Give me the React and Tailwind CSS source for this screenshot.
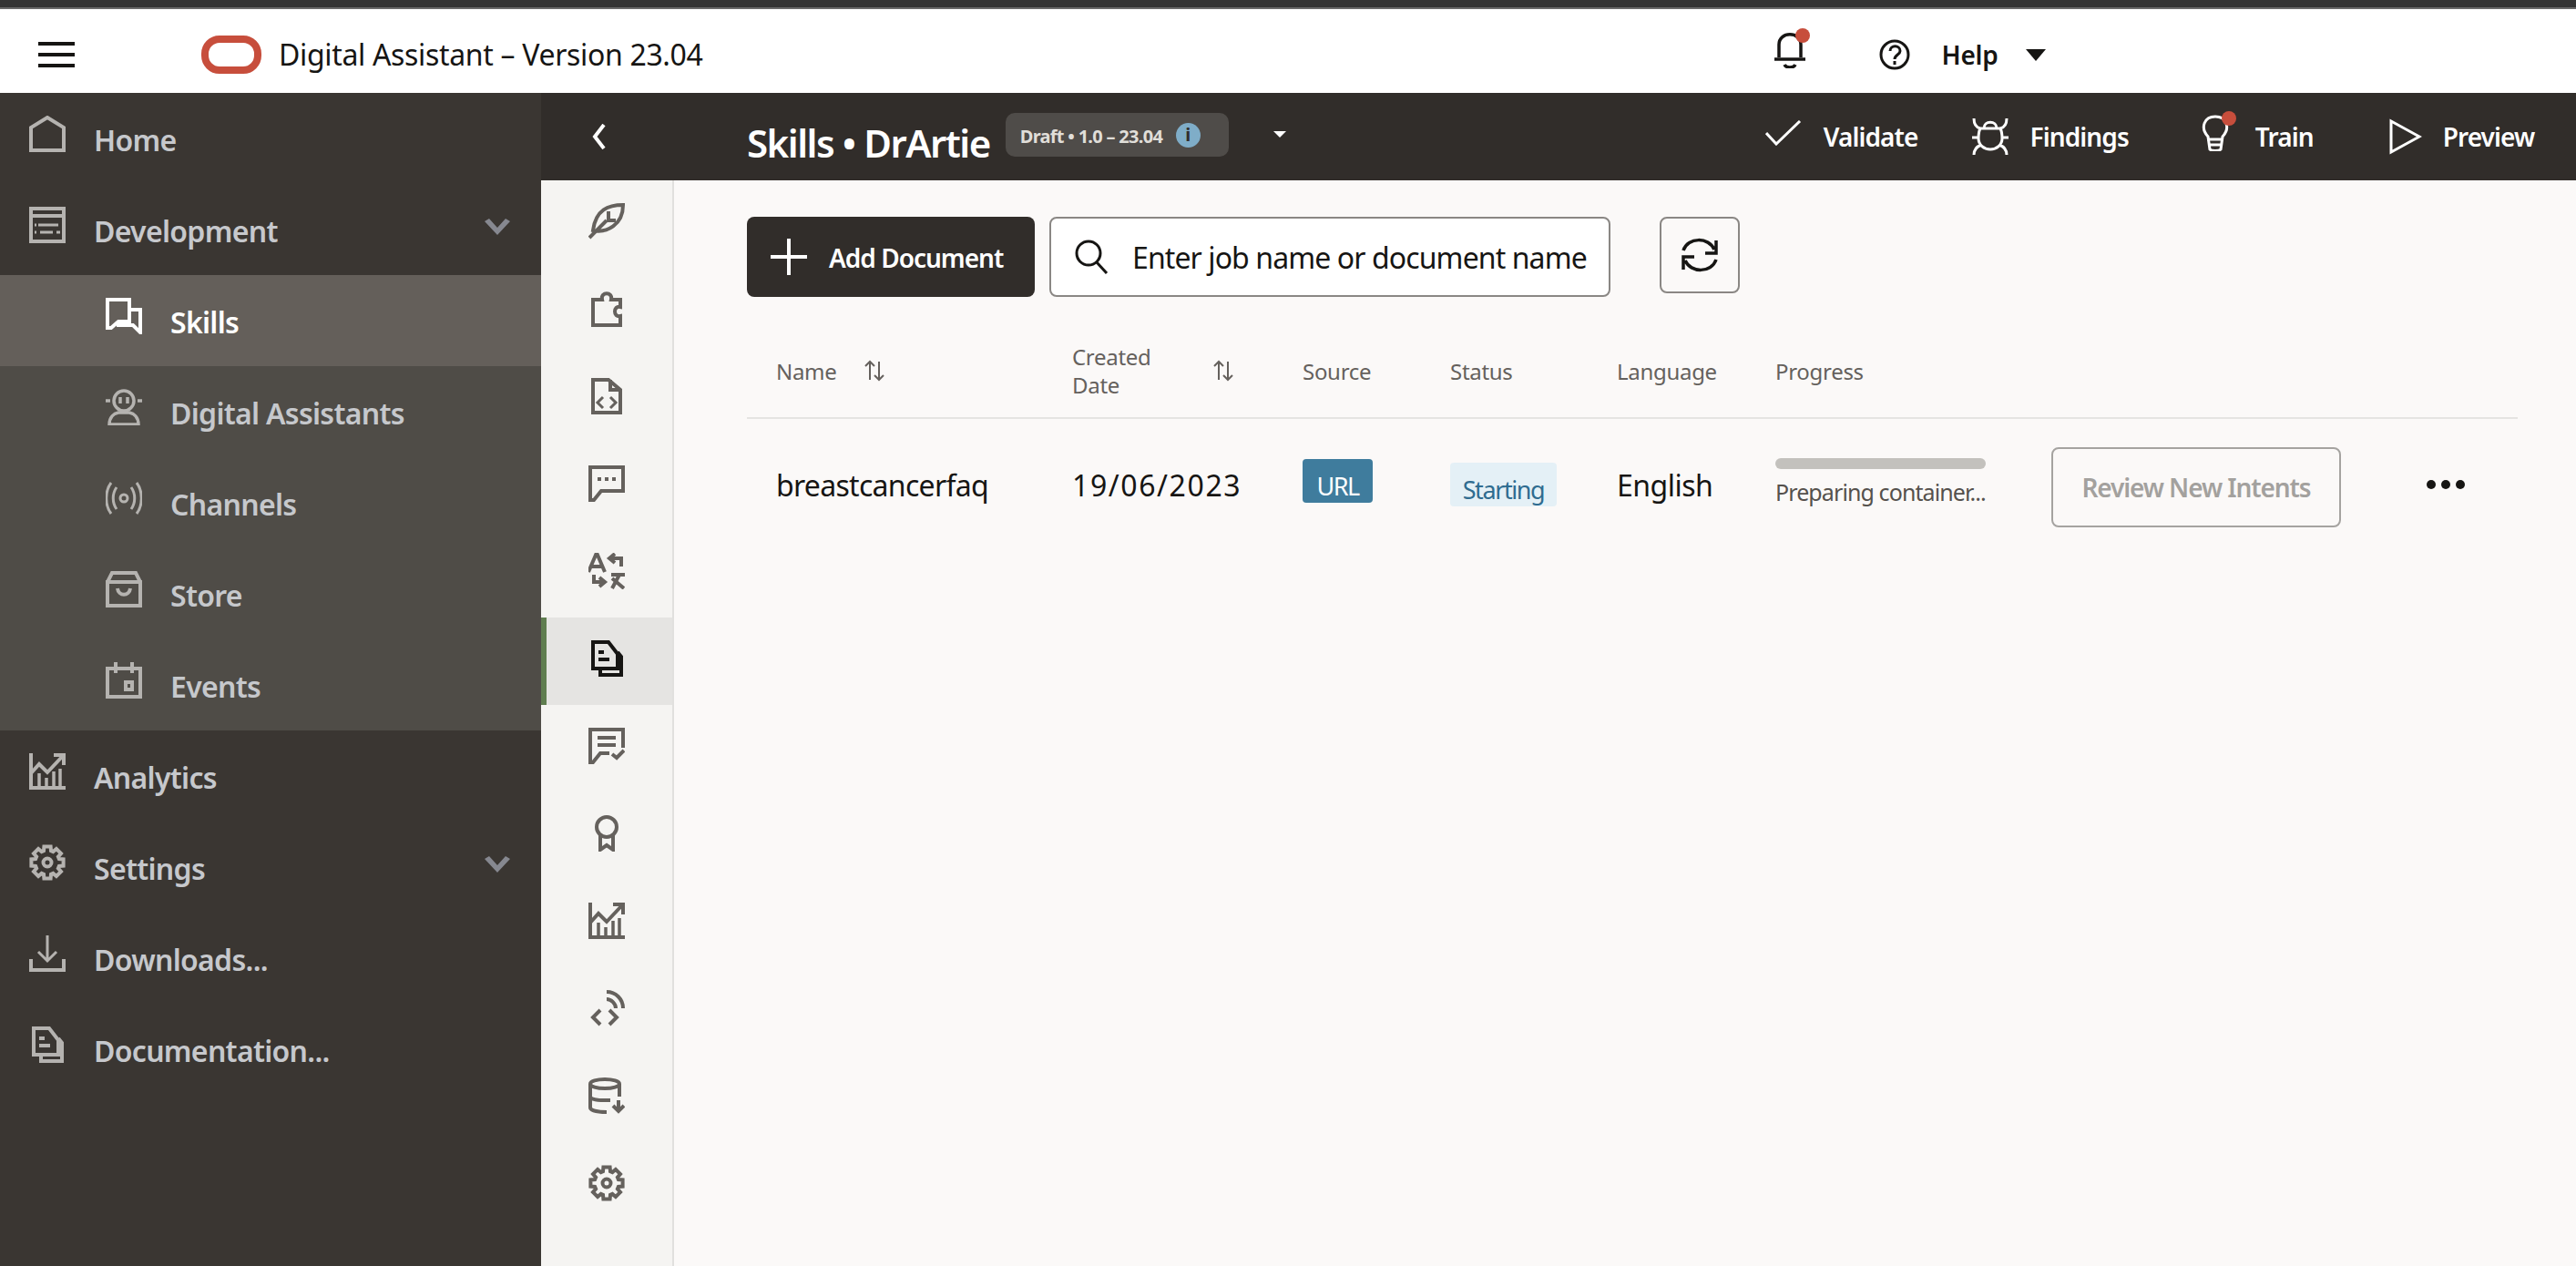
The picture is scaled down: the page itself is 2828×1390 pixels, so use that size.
import React from 'react';

const Svg = ({ className = 'w-10 h-10', sw = 4, children }) => (
  <svg viewBox="0 0 40 40" fill="none" stroke="currentColor" strokeWidth={sw} className={className}>
    {children}
  </svg>
);

// outlined 8 tooth gear
const gearPoints = () => {
  const pts = [];
  for (let i = 0; i < 8; i++) {
    const a = (i * Math.PI) / 4 - Math.PI / 2;
    [[-0.3, 13.5], [-0.2, 18], [0.2, 18], [0.3, 13.5]].forEach(([d, r]) => {
      pts.push(`${(20 + r * Math.cos(a + d)).toFixed(1)},${(20 + r * Math.sin(a + d)).toFixed(1)}`);
    });
  }
  return pts.join(' ');
};

const HomeIcon = () => <Svg><path d="M2 38V13L20 2l18 11v25z" /></Svg>;
const DevIcon = () => (
  <Svg>
    <path d="M2 2h36v36H2zM2 10h36" />
    <path d="M10 20h22M6 20h2M6 28h2M12 28h14M30 28h4" strokeWidth="3" />
  </Svg>
);
const SkillsIcon = () => (
  <Svg>
    <path d="M2 2h24v24H14l-8 7H2z" />
    <path d="M28 13h10v25l-8-8H14v-4" />
  </Svg>
);
const RobotIcon = () => (
  <Svg sw="3.5">
    <circle cx="20" cy="13" r="11" />
    <path d="M16 9v7M24 9v7M0 13h5M35 13h5M4 39c0-8 5-12 10-13h12c5 1 10 5 10 13z" />
  </Svg>
);
const ChannelsIcon = () => (
  <Svg sw="3">
    <circle cx="20" cy="20" r="4" />
    <path d="M12 8c-5 7-5 17 0 24M28 8c5 7 5 17 0 24M6 3C-1 12-1 28 6 37M34 3c7 9 7 25 0 34" />
  </Svg>
);
const StoreIcon = () => (
  <Svg>
    <path d="M2 12h36v26H2zM2 12l5-10h26l5 10" />
    <path d="M13 19c1 9 13 9 14 0" />
  </Svg>
);
const EventsIcon = () => (
  <Svg>
    <path d="M2 7h36v31H2zM11 0v12M29 0v12" />
    <path d="M22 22h7v8h-7z" />
  </Svg>
);
const ChartIcon = () => (
  <Svg>
    <path d="M2 0v38h38M2 22l9-10 9 9L36 4M27 2h11v11" />
    <path d="M11 22v14M19 27v9M27 20v16M34 17v19" strokeWidth="3.5" />
  </Svg>
);
const GearIcon = () => (
  <Svg>
    <polygon points={gearPoints()} />
    <circle cx="20" cy="20" r="4.5" />
  </Svg>
);
const DownloadIcon = () => (
  <Svg sw="3">
    <path d="M20 0v28M10 18l10 10 10-10" />
    <path d="M2 26v12h36V26" strokeWidth="4" />
  </Svg>
);
const DocsIcon = () => (
  <Svg>
    <path d="M5 2h17l10 13v16H5zM11 13h6M11 21h12" />
    <path d="M13 31v7h23V18l-4-5" />
  </Svg>
);
const LeafIcon = () => (
  <Svg>
    <path d="M38 2C22 2 8 7 5 30c15 3 33-6 33-28zM1 38l19-19M22 9v10h8" />
  </Svg>
);
const PuzzleIcon = () => (
  <Svg>
    <path d="M5 38V10h10c-2-9 12-9 10 0h10v8c-8-2-8 12 0 10v10z" />
  </Svg>
);
const CodeDocIcon = () => (
  <Svg>
    <path d="M5 2h17l13 11v25H5zM24 2v11h9" />
    <path d="M16 21l-6 6 6 6M24 21l6 6-6 6" strokeWidth="3" />
  </Svg>
);
const ChatIcon = () => (
  <Svg>
    <path d="M2 2h36v26H14L6 38H2z" />
    <path d="M10 15h4M18 15h4M26 15h4" />
  </Svg>
);
const TranslateIcon = () => (
  <Svg>
    <path d="M0 21L9 0l9 21M4 15h10" />
    <path d="M36 15V6H24M29 1l-6 5 6 5M6 24v8h11M12 27l6 5-6 5" />
    <path d="M25 24h15M34 24L26 39M26 28l13 11" />
  </Svg>
);
const ChatCheckIcon = () => (
  <Svg>
    <path d="M38 22V2H2v36h3l8-10h10" />
    <path d="M10 11h20M10 19h20" />
    <path d="M26 29l5 4 8-8" />
  </Svg>
);
const BadgeIcon = () => (
  <Svg>
    <circle cx="20" cy="13" r="11" />
    <path d="M13 22v16l7-5 7 5V22" />
  </Svg>
);
const ApiIcon = () => (
  <Svg>
    <path d="M13 22l-8 8 8 8M23 22l8 8-8 8" />
    <path d="M20 2c10 0 18 8 18 18M20 10c5 0 10 5 10 10" />
  </Svg>
);
const DbIcon = () => (
  <Svg>
    <ellipse cx="18" cy="7" rx="16" ry="5" />
    <path d="M34 7v14M2 7v26c0 3 8 5 18 5M2 21c0 3 8 4 16 4h6" />
    <path d="M33 25v12M27 31l6 6 6-6" />
  </Svg>
);
const SortIcon = () => (
  <svg viewBox="0 0 24 24" fill="none" stroke="currentColor" strokeWidth="2" className="w-6 h-6 text-[#65615d]">
    <path d="M7 22V2M2 7l5-5 5 5M17 2v20M12 17l5 5 5-5" />
  </svg>
);

const navTop = [
  { label: 'Home', icon: HomeIcon },
  { label: 'Development', icon: DevIcon, chevron: true },
];
const navSub = [
  { label: 'Skills', icon: SkillsIcon, active: true },
  { label: 'Digital Assistants', icon: RobotIcon },
  { label: 'Channels', icon: ChannelsIcon },
  { label: 'Store', icon: StoreIcon },
  { label: 'Events', icon: EventsIcon },
];
const navBottom = [
  { label: 'Analytics', icon: ChartIcon },
  { label: 'Settings', icon: GearIcon, chevron: true },
  { label: 'Downloads...', icon: DownloadIcon },
  { label: 'Documentation...', icon: DocsIcon },
];
const stripIcons = [LeafIcon, PuzzleIcon, CodeDocIcon, ChatIcon, TranslateIcon, DocsIcon, ChatCheckIcon, BadgeIcon, ChartIcon, ApiIcon, DbIcon, GearIcon];

const Chevron = () => (
  <svg viewBox="0 0 28 18" className="w-7 h-[18px] text-[#868890] absolute right-[34px] top-[38px]" fill="currentColor">
    <path d="M0 3l5-3 9 10 9-10 5 3-14 15z" />
  </svg>
);

const NavRow = ({ item, sub }) => {
  const Icon = item.icon;
  return (
    <div className={`relative h-[100px] flex items-center ${sub ? 'pl-[116px]' : 'pl-[32px]'} ${item.active ? 'bg-[#645f5a] text-white' : 'text-[#c6c8cc]'}`}>
      <span className={`mb-[10px] ${item.active ? 'text-white' : 'text-[#b5b3b0]'}`}><Icon /></span>
      <span className="ml-[31px] mt-[3px] text-[32px] font-semibold tracking-[-0.7px]">{item.label}</span>
      {item.chevron && <Chevron />}
    </div>
  );
};

const HeaderAction = ({ icon, label, className }) => (
  <div className={`flex items-center ${className}`}>
    {icon}
    <span className="text-[28px] font-semibold tracking-[-0.9px] text-white">{label}</span>
  </div>
);

const cellHead = 'text-[24px] leading-[31px] text-[#65615d] tracking-[-0.3px]';

export default function App() {
  return (
    <div className="h-screen w-full flex flex-col overflow-hidden bg-[#fbf9f8] font-['Noto_Sans',sans-serif]">
      <div className="h-[8px] bg-[#343434] shrink-0" />
      <div className="h-[2px] bg-[#6a6a6a] shrink-0" />

      {/* top bar */}
      <header className="h-[92px] shrink-0 bg-white flex items-center pt-[8px] text-[#161513]">
        <div className="ml-[42px] w-[40px] h-[28px] flex flex-col justify-between">
          <div className="h-[4px] bg-[#161513]" />
          <div className="h-[4px] bg-[#161513]" />
          <div className="h-[4px] bg-[#161513]" />
        </div>
        <div className="ml-[139px] w-[66px] h-[42px] rounded-[20px] border-[8px] border-[#c74e3c]" />
        <span className="ml-[19px] text-[32px] tracking-[-0.33px]">Digital Assistant – Version 23.04</span>
        <div className="relative ml-[1175px] mt-[-10px]">
          <svg viewBox="0 0 36 40" fill="none" stroke="currentColor" strokeWidth="3.5" className="w-9 h-10">
            <path d="M6 28V14C6-1 30-1 30 14v14M1 30h34M12 36c2 4 10 4 12 0" />
          </svg>
          <div className="absolute right-[-4px] top-[-4px] w-4 h-4 rounded-full bg-[#c74e3c]" />
        </div>
        <svg viewBox="0 0 34 34" fill="none" stroke="currentColor" strokeWidth="3" className="w-[34px] h-[34px] ml-[80px]">
          <circle cx="17" cy="17" r="15" />
          <path d="M12 13c0-7 11-7 11 0 0 4-6 4-6 9M17 24v4" />
        </svg>
        <span className="ml-[35px] text-[28px] font-semibold tracking-[-0.3px]">Help</span>
        <div className="ml-[31px] w-0 h-0 border-x-[11px] border-x-transparent border-t-[13px] border-t-[#161513]" />
      </header>

      <div className="flex-1 flex min-h-0">
        {/* side nav */}
        <aside className="w-[594px] shrink-0 bg-[#3a3632]">
          {navTop.map((n) => <NavRow key={n.label} item={n} />)}
          <div className="bg-[#4f4c47]">
            {navSub.map((n) => <NavRow key={n.label} item={n} sub />)}
          </div>
          {navBottom.map((n) => <NavRow key={n.label} item={n} />)}
        </aside>

        <div className="flex-1 flex flex-col min-w-0">
          {/* skill header */}
          <div className="h-[96px] shrink-0 bg-[#312d2a] flex items-center text-white relative">
            <svg viewBox="0 0 20 28" fill="none" stroke="currentColor" strokeWidth="4" className="w-5 h-7 ml-[54px]">
              <path d="M15 1L5 14l10 13" />
            </svg>
            <span className="ml-[152px] mt-[12px] text-[42px] font-semibold tracking-[-1.5px]">Skills • DrArtie</span>
            <div className="ml-[17px] w-[245px] h-[48px] rounded-[10px] bg-[#4f4c49] flex items-center pl-[16px] mb-[4px]">
              <span className="text-[20px] mt-[3px] font-bold tracking-[-0.7px] text-[#e0ded9] w-[171px] whitespace-nowrap">Draft • 1.0 – 23.04</span>
              <span className="w-[27px] h-[27px] rounded-full bg-[#7fadc8] text-[#312d2a] flex items-center justify-center text-[20px] font-bold">i</span>
            </div>
            <div className="ml-[49px] mb-[6px] w-0 h-0 border-x-[7px] border-x-transparent border-t-[7px] border-t-white" />

            <HeaderAction
              className="ml-[526px]"
              label="Validate"
              icon={<svg viewBox="0 0 40 28" fill="none" stroke="currentColor" strokeWidth="3" className="w-10 h-7 mr-[24px] mb-[8px]"><path d="M1 14l11 12L38 1" /></svg>}
            />
            <HeaderAction
              className="ml-[59px]"
              label="Findings"
              icon={
                <svg viewBox="0 0 40 40" fill="none" stroke="currentColor" strokeWidth="3" className="w-10 h-10 mr-[24px]">
                  <path d="M2 0c0 6 3 10 7 11h22c4-1 7-5 7-11M13 11c0-9 14-9 14 0M9 11c-2 4-2 8-2 11 0 7 6 12 13 12s13-5 13-12c0-3 0-7-2-11M0 21h7M33 21h7M2 40c0-6 3-9 8-11M38 40c0-6-3-9-8-11" />
                </svg>
              }
            />
            <HeaderAction
              className="ml-[79px] relative"
              label="Train"
              icon={
                <div className="relative mr-[28px] mb-[8px]">
                  <svg viewBox="0 0 32 40" fill="none" stroke="currentColor" strokeWidth="3" className="w-8 h-10">
                    <path d="M8 24C-1 14 4 2 16 2s17 12 8 22l-2 14c-2 2-10 2-12 0zM7 27h18M9 33h14" />
                  </svg>
                  <div className="absolute right-[-7px] top-[-4px] w-4 h-4 rounded-full bg-[#c74e3c]" />
                </div>
              }
            />
            <HeaderAction
              className="ml-[83px]"
              label="Preview"
              icon={<svg viewBox="0 0 36 40" fill="none" stroke="currentColor" strokeWidth="3" className="w-9 h-10 mr-[23px]"><path d="M2 3l31 17L2 37z" /></svg>}
            />
          </div>

          <div className="flex-1 flex min-h-0">
            {/* skill icon strip */}
            <nav className="w-[146px] shrink-0 bg-[#f5f4f2] border-r-2 border-[#e1e0de] text-[#65615d]">
              {stripIcons.map((Icon, i) => (
                <div key={i} className={`h-[96px] flex items-center justify-center pb-[6px] ${i === 5 ? 'bg-[#e5e4e2] text-[#161513] border-l-[6px] border-[#5f7d4f] pr-[6px]' : ''}`}>
                  <Icon />
                </div>
              ))}
            </nav>

            <main className="flex-1 min-w-0 bg-[#fbf9f8] pl-[80px] pr-[64px] pt-[40px]">
              {/* toolbar */}
              <div className="flex items-start">
                <button className="w-[316px] h-[88px] rounded-[8px] bg-[#312d2a] text-white flex items-center pl-[26px]">
                  <svg viewBox="0 0 40 40" stroke="currentColor" strokeWidth="4" className="w-10 h-10"><path d="M20 0v40M0 20h40" /></svg>
                  <span className="ml-[24px] mt-[1px] text-[28px] font-semibold tracking-[-1px]">Add Document</span>
                </button>
                <div className="ml-[16px] w-[616px] h-[88px] rounded-[8px] border-2 border-[#8a8784] bg-white flex items-center pl-[26px] overflow-hidden">
                  <svg viewBox="0 0 38 38" fill="none" stroke="currentColor" strokeWidth="3" className="w-[38px] h-[38px] text-[#161513] shrink-0"><circle cx="15" cy="15" r="13" /><path d="M24 25l11 12" /></svg>
                  <span className="ml-[25px] mt-[2px] text-[32px] text-[#161513] whitespace-nowrap tracking-[-0.9px]">Enter job name or document name</span>
                </div>
                <button className="ml-[54px] w-[88px] h-[84px] rounded-[8px] border-2 border-[#8a8784] flex items-center justify-center text-[#161513]">
                  <svg viewBox="0 0 40 40" fill="none" stroke="currentColor" strokeWidth="3.5" className="w-10 h-10">
                    <path d="M2 15C7 0 30 0 36 14M38 4v14H26M38 25C33 40 10 40 4 26M2 36V22h12" />
                  </svg>
                </button>
              </div>

              {/* document table */}
              <div className="mt-[30px] border-b-2 border-[#e5e4e2] h-[104px] grid grid-cols-[325px_253px_162px_183px_174px_1fr] pl-[32px] items-center">
                <div className={`${cellHead} flex items-center`}>Name<span className="ml-[30px]"><SortIcon /></span></div>
                <div className={`${cellHead} flex items-center`}>
                  <span>Created<br />Date</span>
                  <span className="ml-[68px]"><SortIcon /></span>
                </div>
                <div className={cellHead}>Source</div>
                <div className={cellHead}>Status</div>
                <div className={cellHead}>Language</div>
                <div className={cellHead}>Progress</div>
              </div>
              <div className="h-[146px] grid grid-cols-[325px_253px_162px_183px_174px_303px_412px_1fr] pl-[32px] items-center text-[32px] text-[#161513]">
                <div className="tracking-[-0.7px]">breastcancerfaq</div>
                <div className="tracking-[1.6px]">19/06/2023</div>
                <div>
                  <span className="w-[77px] h-[48px] rounded-[4px] bg-[#3f7c9d] text-white text-[27px] leading-[32px] flex items-end justify-center pb-[2px] mb-[10px] tracking-[-1.5px]">URL</span>
                </div>
                <div>
                  <span className="w-[117px] h-[48px] rounded-[4px] bg-[#e4f0f6] text-[#2f6c90] text-[27px] leading-[32px] flex items-end justify-center pb-[2px] mb-[2px] tracking-[-1.4px] whitespace-nowrap">Starting</span>
                </div>
                <div className="tracking-[-0.5px]">English</div>
                <div className="mb-[6px]">
                  <div className="w-[231px] h-[12px] rounded-full bg-[#c3c1bd]" />
                  <div className="mt-[7px] text-[25px] leading-[36px] tracking-[-0.9px] text-[#55514d] whitespace-nowrap">Preparing container...</div>
                </div>
                <div>
                  <button className="w-[318px] h-[88px] rounded-[8px] border-2 border-[#a5a3a0] text-[#a3a19e] text-[28px] font-semibold tracking-[-1.1px] mt-[4px] whitespace-nowrap">Review New Intents</button>
                </div>
                <div className="flex gap-[6px] mb-[2px]">
                  <span className="w-[10px] h-[10px] rounded-full bg-[#161513]" />
                  <span className="w-[10px] h-[10px] rounded-full bg-[#161513]" />
                  <span className="w-[10px] h-[10px] rounded-full bg-[#161513]" />
                </div>
              </div>
            </main>
          </div>
        </div>
      </div>
    </div>
  );
}
